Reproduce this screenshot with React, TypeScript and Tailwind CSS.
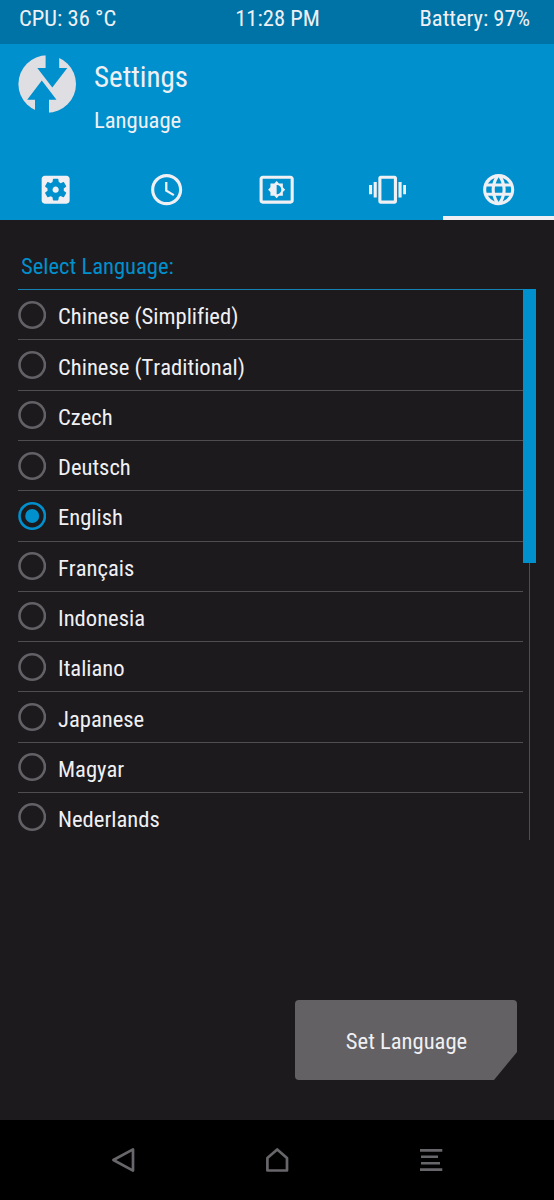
import React, { useState } from "react";
import { MdAccessTime, MdLanguage, MdVibration } from "react-icons/md";

const languages = [
  "Chinese (Simplified)",
  "Chinese (Traditional)",
  "Czech",
  "Deutsch",
  "English",
  "Français",
  "Indonesia",
  "Italiano",
  "Japanese",
  "Magyar",
  "Nederlands",
];

type IconProps = { size: number; color: string };

const SettingsIcon = ({ size, color }: IconProps) => (
  <svg width={size} height={size} viewBox="0 0 24 24" fill={color}>
    <path d="M12 10c-1.1 0-2 .9-2 2s.9 2 2 2 2-.9 2-2-.9-2-2-2zm7-7H5c-1.11 0-2 .9-2 2v14c0 1.1.89 2 2 2h14c1.11 0 2-.9 2-2V5c0-1.1-.89-2-2-2zm-1.75 9c0 .23-.02.46-.05.68l1.48 1.16c.13.11.17.3.08.45l-1.4 2.42c-.09.15-.27.21-.43.15l-1.74-.7c-.36.28-.76.51-1.18.69l-.26 1.85c-.03.17-.18.3-.35.3h-2.8c-.17 0-.32-.13-.35-.29l-.26-1.85c-.43-.18-.82-.41-1.18-.69l-1.74.7c-.16.06-.34 0-.43-.15l-1.4-2.42c-.09-.15-.05-.34.08-.45l1.48-1.16c-.03-.23-.05-.46-.05-.69 0-.23.02-.46.05-.68l-1.48-1.16c-.13-.11-.17-.3-.08-.45l1.4-2.42c.09-.15.27-.21.43-.15l1.74.7c.36-.28.76-.51 1.18-.69l.26-1.85c.03-.17.18-.3.35-.3h2.8c.17 0 .32.13.35.29l.26 1.85c.43.18.82.41 1.18.69l1.74-.7c.16-.06.34 0 .43.15l1.4 2.42c.09.15.05.34-.08.45l-1.48 1.16c.03.23.05.46.05.69z" />
  </svg>
);

const BrightnessIcon = ({ size, color }: IconProps) => (
  <svg width={size} height={size} viewBox="0 0 24 24" fill={color}>
    <path d="M21 3H3c-1.1 0-2 .9-2 2v14c0 1.1.9 2 2 2h18c1.1 0 2-.9 2-2V5c0-1.1-.9-2-2-2zm0 16.01H3V4.99h18v14.02zM8 16h2.5l1.5 1.5 1.5-1.5H16v-2.5l1.5-1.5-1.5-1.5V8h-2.5L12 6.5 10.5 8H8v2.5L6.5 12 8 13.5V16zm4-7c1.66 0 3 1.34 3 3s-1.34 3-3 3V9z" />
  </svg>
);

const tabs = [
  { name: "General", Icon: SettingsIcon },
  { name: "Time zone", Icon: MdAccessTime },
  { name: "Screen", Icon: BrightnessIcon },
  { name: "Vibration", Icon: MdVibration },
  { name: "Language", Icon: MdLanguage },
];

const Logo = () => (
  <svg width="58" height="58" viewBox="0 0 58 58" className="shrink-0">
    <circle cx="29.2" cy="29" r="28.8" fill="#dfdfe3" />
    <path
      d="M27.6 0H41.2V13H49.3L34.3 32.5L19.3 13H27.6Z M23.8 25.5L38.5 44.8H31V58H17V44.8H9.2Z"
      fill="#0090cd"
    />
  </svg>
);

const StatusBar = () => (
  <div className="grid h-[44px] grid-cols-3 bg-[#0073a6] pl-[19px] pr-6 pt-[5px] leading-7">
    <span>CPU: 36 °C</span>
    <span className="pl-[6px] text-center">11:28 PM</span>
    <span className="text-right">Battery: 97%</span>
  </div>
);

const TabBar = () => (
  <nav className="grid h-[60px] grid-cols-5">
    {tabs.map(({ name, Icon }) => (
      <button
        key={name}
        aria-label={name}
        className={`flex justify-center border-b-4 pt-[11px] ${
          name === "Language" ? "border-[#f0f0f4]" : "border-transparent"
        }`}
      >
        <Icon size={37.3} color="#f0f0f4" />
      </button>
    ))}
  </nav>
);

const Radio = ({ checked }: { checked: boolean }) => (
  <svg
    width="28"
    height="28"
    viewBox="0 0 28 28"
    className={`shrink-0 ${checked ? "text-[#0090cd]" : "text-[#636166]"}`}
  >
    <circle cx="14.2" cy="14" r="12.7" fill="none" stroke="currentColor" strokeWidth="2.6" />
    {checked && <circle cx="14.2" cy="14" r="7" fill="currentColor" />}
  </svg>
);

const NavBar = () => (
  <footer className="flex h-20 items-center justify-between bg-black px-[111px] text-[#68666a]">
    <svg width="24" height="26" viewBox="0 0 24 26" fill="none" stroke="currentColor" strokeWidth="2.7" strokeLinejoin="round">
      <path d="M2.4 13L22 2.4V23.6Z" />
    </svg>
    <svg width="24" height="26" viewBox="0 0 24 26" fill="none" stroke="currentColor" strokeWidth="2.7" strokeLinejoin="round">
      <path d="M12.2 2.4L22 11V23.5H2.4V11Z" />
    </svg>
    <svg width="24" height="26" viewBox="0 0 24 26" fill="none" stroke="currentColor" strokeWidth="2.6">
      <path d="M1 3.4H23.3M2 9.8H19M2 16.2H21M1 22.6H23.3" />
    </svg>
  </footer>
);

export default function App() {
  const [selected, setSelected] = useState("English");

  return (
    <main className="flex h-[1200px] w-[554px] flex-col overflow-hidden bg-[#1c1a1d] font-['Roboto_Condensed',Roboto,sans-serif] text-[22.6px] text-[#f0f0f4] [font-kerning:none] [font-variant-ligatures:none]">
      <StatusBar />
      <header className="flex h-[176px] flex-col justify-between bg-[#0090cd]">
        <div className="flex gap-[18px] pl-[18px] pt-[11px]">
          <Logo />
          <div className="pt-1">
            <h1 className="text-[29px] leading-9">Settings</h1>
            <p className="pt-3 leading-7">Language</p>
          </div>
        </div>
        <TabBar />
      </header>
      <section className="flex grow flex-col px-[18px]">
        <h2 className="h-[69px] pl-[3px] pt-[33px] leading-7 text-[#0090cd]">
          Select Language:
        </h2>
        <div className="flex h-[551px]">
          <ul className="h-full grow overflow-hidden border-t border-t-[#1481b3] pt-[0.2px]">
            {languages.map((language) => (
              <li
                key={language}
                onClick={() => setSelected(language)}
                className="flex h-[50.27px] items-center gap-3 border-b border-[#4e4d50]"
              >
                <Radio checked={language === selected} />
                <span className="pt-[5px]">{language}</span>
              </li>
            ))}
          </ul>
          <div className="flex w-[13px] flex-col items-center">
            <div className="h-[274px] w-full bg-[#0090cd]" />
            <div className="w-px grow bg-[#4e4d50]" />
          </div>
        </div>
        <button className="mr-[19px] mt-40 h-20 w-[222px] self-end rounded-[4px] bg-[#636163] pl-px pt-[3px] [clip-path:polygon(0_0,100%_0,100%_52px,199px_100%,0_100%)]">
          Set Language
        </button>
      </section>
      <NavBar />
    </main>
  );
}
